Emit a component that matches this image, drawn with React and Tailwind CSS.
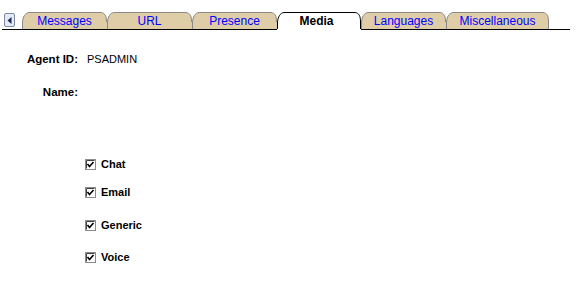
import React from 'react';

const tabs = [
    { label: 'Messages', width: 85 },
    { label: 'URL', width: 85 },
    { label: 'Presence', width: 85 },
    { label: 'Media', width: 84, active: true },
    { label: 'Languages', width: 85 },
    { label: 'Miscellaneous', width: 103, last: true },
];

const media = ['Chat', 'Email', 'Generic', 'Voice'];

// the tab outline is a drawing, the label sits on top in flow
function TabShape({ w, active, last }) {
    const right = active || last ? 17 : 10;
    const outline = `M0.5,17 L0.5,10 C1,5 3,1 7,0.5 L${w - 6},0.5 C${w - 2},1 ${w - 0.5},4 ${w - 0.5},10 L${w - 0.5},${right}`;
    const fill = `M0,18 L0,10 C0.5,5 3,0.5 7,0.5 L${w - 6},0.5 C${w - 2},1 ${w},4 ${w},10 L${w},18 Z`;
    return (
        <svg className="absolute inset-0" width={w} height={18} viewBox={`0 0 ${w} 18`}>
            <path d={fill} fill={active ? '#ffffff' : '#dfcda8'} />
            <path d={outline} fill="none" stroke={active ? '#000000' : '#8a8a8a'} strokeWidth="1" />
            {!active && <line x1="0" y1="17.5" x2={w} y2="17.5" stroke="#000000" strokeWidth="1" />}
        </svg>
    );
}

function CheckBox() {
    return (
        <svg width="11" height="11" viewBox="0 0 11 11" className="shrink-0">
            <rect x="0.5" y="0.5" width="10" height="10" fill="#ffffff" stroke="#8c8c8c" />
            <path d="M1.5,9.5 L1.5,1.5 L9.5,1.5" fill="none" stroke="#404040" />
            <path d="M2.5,5 L4.5,7.5 L8.5,3" fill="none" stroke="#000000" strokeWidth="1.6" />
        </svg>
    );
}

export default function App() {
    return (
        <div className="w-[584px] h-[304px] bg-white font-['Liberation_Sans',Arial,sans-serif] overflow-hidden">

            {/* Tab strip */}
            <div className="flex items-end pt-[12px] pl-[2px]">
                <div className="w-[20px] h-[18px] border-b border-black flex items-start pl-[2px] pt-[1px]">
                    <div className="w-[11px] h-[14px] rounded-[2px] border border-[#7d8aa3] bg-[#e4eaf4] flex items-center justify-center">
                        <svg width="5" height="7" viewBox="0 0 5 7">
                            <path d="M4.5,0 L0.5,3.5 L4.5,7 Z" fill="#1d2b5c" />
                        </svg>
                    </div>
                </div>
                {tabs.map((tab) => (
                    <div
                        key={tab.label}
                        className="relative h-[18px] flex items-start justify-center pt-[3px]"
                        style={{ width: tab.width }}
                    >
                        <TabShape w={tab.width} active={tab.active} last={tab.last} />
                        <span
                            className={
                                tab.active
                                    ? 'relative text-[12px] leading-[13px] font-bold text-black -ml-[5px]'
                                    : 'relative text-[12px] leading-[13px] text-[#0000ff]'
                            }
                        >
                            {tab.label}
                        </span>
                    </div>
                ))}
                <div className="w-[21px] h-[18px] border-b border-black" />
            </div>

            {/* Agent info */}
            <div className="mt-[23px] grid grid-cols-[78px_1fr] gap-x-[9px] gap-y-[20px] text-[11px] leading-[13px] text-black">
                <div className="text-right font-bold text-[11.5px]">Agent ID:</div>
                <div>PSADMIN</div>
                <div className="text-right font-bold text-[11.5px]">Name:</div>
                <div></div>
            </div>

            {/* Media checkboxes */}
            <div className="mt-[59px] pl-[85px] flex flex-col text-[11px] leading-[13px] font-bold text-black">
                {media.map((m, i) => (
                    <div
                        key={m}
                        className={
                            i === 0 ? 'flex items-center gap-[5px]' : i === 1 ? 'flex items-center gap-[5px] mt-[15px]' : i === 2 ? 'flex items-center gap-[5px] mt-[20px]' : 'flex items-center gap-[5px] mt-[19px]'
                        }
                    >
                        <CheckBox />
                        <span>{m}</span>
                    </div>
                ))}
            </div>
        </div>
    );
}
